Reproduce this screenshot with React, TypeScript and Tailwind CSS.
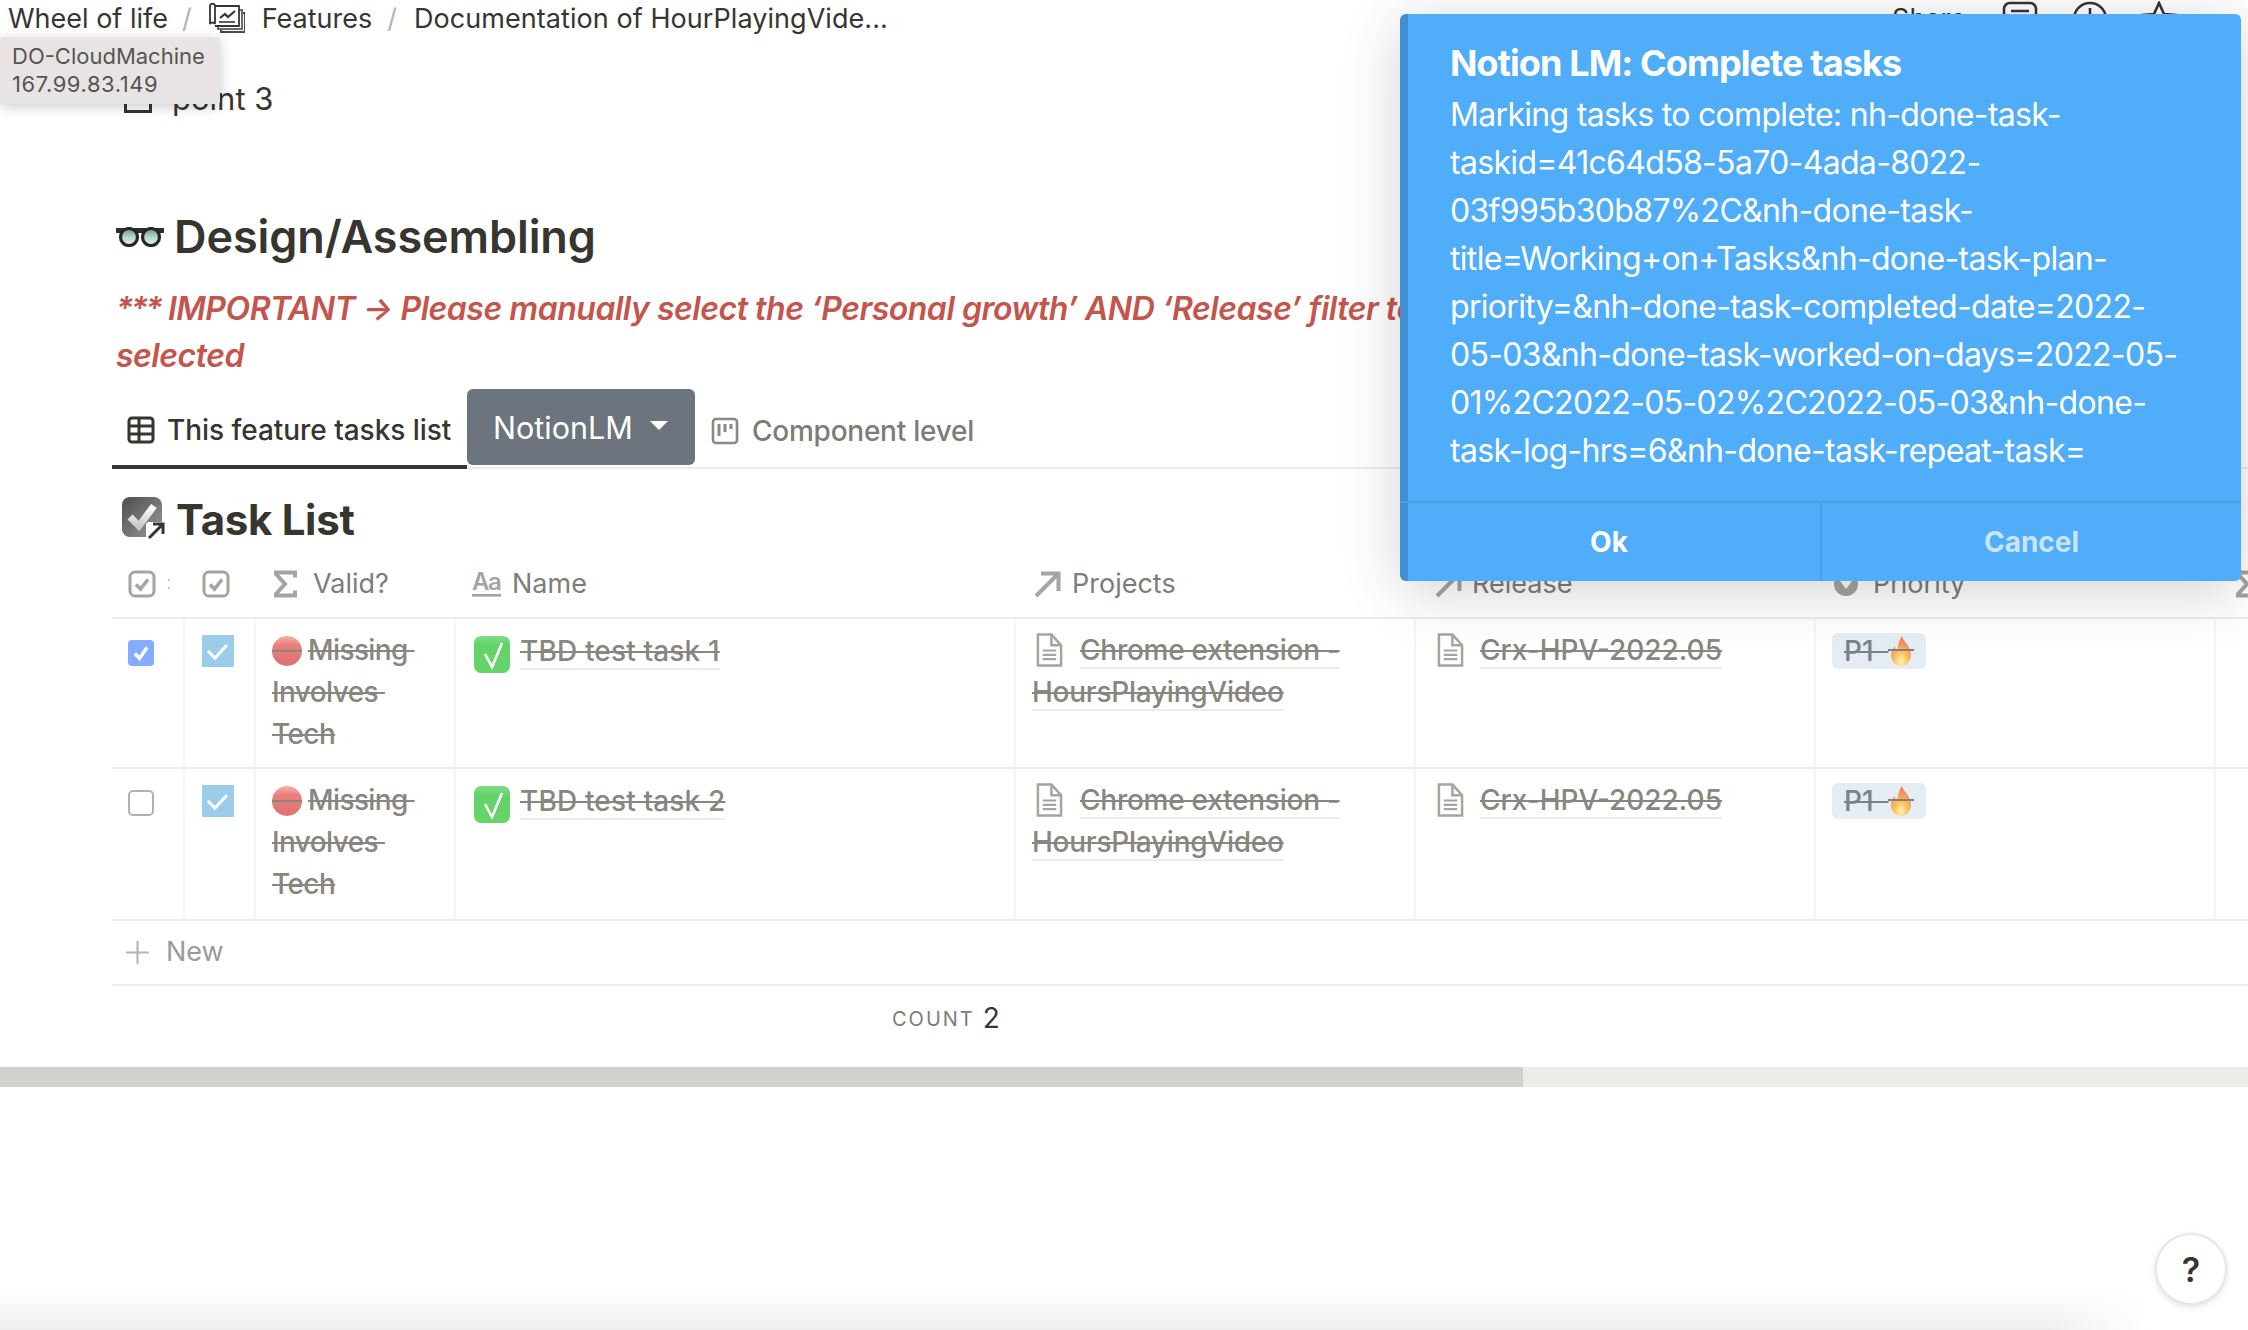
import React from "react";

const FONT = "font-['Inter','Liberation_Sans',sans-serif]";
const GRID = "grid grid-cols-[73px_71px_200px_560px_400px_400px_400px_32px]";

function CheckHead() {
  return (
    <svg viewBox="0 0 28 28" className="w-[28px] h-[28px] shrink-0" fill="none">
      <rect x="2" y="2" width="24" height="24" rx="5" stroke="#a5a49f" strokeWidth="3" />
      <path d="M8 14.5l4.5 4.5L20 9.5" stroke="#a5a49f" strokeWidth="3.6" />
    </svg>
  );
}
function Sigma() {
  return (
    <svg viewBox="0 0 24 28" className="w-[24px] h-[28px] shrink-0" fill="none">
      <path d="M22 7.5V2.5H3v1.5L12 14 3 24v1.5H22v-5" stroke="#a5a49f" strokeWidth="4" />
    </svg>
  );
}
function Arrow() {
  return (
    <svg viewBox="0 0 28 28" className="w-[28px] h-[28px] shrink-0" fill="none">
      <path d="M3 26L25 4M8 3.5h17.5V21" stroke="#a5a49f" strokeWidth="4" />
    </svg>
  );
}
function Aa() {
  return (
    <svg viewBox="0 0 30 28" className="w-[30px] h-[28px] shrink-0" fill="#a5a49f">
      <text x="0" y="20" fontSize="24" fontFamily="Inter, sans-serif" fontWeight="600" letterSpacing="-1.5">Aa</text>
      <rect x="0" y="24" width="29" height="2.6" />
    </svg>
  );
}
function Doc() {
  return (
    <svg viewBox="0 0 28 35" className="w-[27px] h-[34px] shrink-0" fill="none" stroke="#a5a49f" strokeWidth="2.6">
      <path d="M2 1.5h14l10 11v21H2z" />
      <path d="M16 1.5v11h10" />
      <path d="M7 18h14M7 22.5h14M7 27h14" strokeWidth="2.2" />
    </svg>
  );
}
function RedDot() {
  return (
    <svg viewBox="0 0 30 30" className="w-[30px] h-[30px] shrink-0 inline align-[-6px]">
      <defs>
        <linearGradient id="rd" x1="0" y1="0" x2="0" y2="1">
          <stop offset="0" stopColor="#f9b0ac" />
          <stop offset="0.3" stopColor="#ea7f7c" />
          <stop offset="1" stopColor="#dd7170" />
        </linearGradient>
      </defs>
      <circle cx="15" cy="15" r="15" fill="url(#rd)" />
      <rect x="0" y="14" width="30" height="2" fill="#87867f" />
    </svg>
  );
}
function GreenCheck() {
  return (
    <svg viewBox="0 0 36 37" className="w-[36px] h-[37px] shrink-0 inline">
      <defs>
        <linearGradient id="gc" x1="0" y1="0" x2="0" y2="1">
          <stop offset="0" stopColor="#7fdc83" />
          <stop offset="0.25" stopColor="#63d369" />
          <stop offset="1" stopColor="#65d46a" />
        </linearGradient>
      </defs>
      <rect width="36" height="37" rx="7" fill="url(#gc)" />
      <path d="M11 18l7 13L28 7" fill="none" stroke="#fff" strokeWidth="2.6" />
    </svg>
  );
}
function Fire() {
  return (
    <svg viewBox="0 0 26 30" className="w-[26px] h-[30px] inline -ml-[1px] shrink-0">
      <defs>
        <radialGradient id="fr" cx="0.5" cy="0.85" r="0.8">
          <stop offset="0" stopColor="#fff6c0" />
          <stop offset="0.35" stopColor="#ffc860" />
          <stop offset="0.75" stopColor="#fb9458" />
          <stop offset="1" stopColor="#f2795a" />
        </radialGradient>
      </defs>
      <path d="M14 0c1 6 9 9 9 19 0 6-5 11-10 11S3 25 3 19c0-4 2-7 4-9 0 3 1 4 2 5 1-6 2-11 5-15z" fill="url(#fr)" />
      <rect x="0" y="13" width="26" height="2" fill="#7b8186" />
    </svg>
  );
}
function BlueCheck({ on }: { on: boolean }) {
  return on ? (
    <svg viewBox="0 0 26 26" className="w-[26px] h-[26px]">
      <rect width="26" height="26" rx="4" fill="#84acff" />
      <path d="M7 13.5l4.5 5L19 7.5" fill="none" stroke="#fff" strokeWidth="3.4" />
    </svg>
  ) : (
    <svg viewBox="0 0 26 26" className="w-[26px] h-[26px]">
      <rect x="1" y="1" width="24" height="24" rx="4" fill="#fff" stroke="#b0b0b0" strokeWidth="2" />
    </svg>
  );
}
function SkyCheck() {
  return (
    <svg viewBox="0 0 32 32" className="w-[32px] h-[32px]">
      <rect width="32" height="32" fill="#9bcdea" />
      <path d="M6 16l7 7L25 10" fill="none" stroke="#fff" strokeWidth="3" />
    </svg>
  );
}
function Glasses() {
  return (
    <svg viewBox="0 0 48 20" className="w-[48px] h-[20px] shrink-0">
      <defs>
        <linearGradient id="gl" x1="0" y1="0" x2="0" y2="1">
          <stop offset="0" stopColor="#6f918e" />
          <stop offset="0.5" stopColor="#b4d6d0" />
          <stop offset="1" stopColor="#e2f3ee" />
        </linearGradient>
      </defs>
      <path d="M1 3.5h46" stroke="#2e2e2e" strokeWidth="5" strokeLinecap="round" />
      <circle cx="13" cy="10" r="8.5" fill="url(#gl)" stroke="#262626" strokeWidth="3.2" />
      <circle cx="35" cy="10" r="8.5" fill="url(#gl)" stroke="#262626" strokeWidth="3.2" />
    </svg>
  );
}
function TaskIcon() {
  return (
    <svg viewBox="0 0 44 44" className="w-[44px] h-[44px] shrink-0">
      <defs>
        <linearGradient id="tk" x1="0" y1="0" x2="1" y2="1">
          <stop offset="0" stopColor="#4d4d4d" />
          <stop offset="1" stopColor="#9a9a9a" />
        </linearGradient>
        <linearGradient id="tc" x1="0" y1="0" x2="0" y2="1">
          <stop offset="0" stopColor="#ffffff" />
          <stop offset="1" stopColor="#c9c9c9" />
        </linearGradient>
      </defs>
      <rect width="40" height="40" rx="8" fill="url(#tk)" />
      <path d="M8 20l9 9L32 9" fill="none" stroke="url(#tc)" strokeWidth="7" />
      <rect x="24" y="25" width="20" height="19" rx="3" fill="#fff" />
      <path d="M27 41l13-13M31 27h10v10" fill="none" stroke="#37352f" strokeWidth="3" />
    </svg>
  );
}
function Features() {
  return (
    <svg viewBox="0 0 36 30" className="w-[36px] h-[30px] shrink-0" fill="none" stroke="#37352f" strokeWidth="1.8">
      <path d="M12 26v3h24V10h-3" stroke="#4a4a4a" strokeWidth="2" />
      <path d="M9 23v3h24V7h-3" stroke="#6a6a6a" strokeWidth="2" />
      <path d="M6 3h24v20H6" fill="#fff" />
      <path d="M1 3c0-3 5-3 5 0v18c-1-2-4-2-5 0z" fill="#fff" />
      <path d="M11 15l5-4 3 3 7-6" strokeWidth="2.2" />
      <path d="M10 19h16" strokeWidth="1.6" />
    </svg>
  );
}
function TableIcon() {
  return (
    <svg viewBox="0 0 28 28" className="w-[28px] h-[28px] shrink-0" fill="none" stroke="#37352f" strokeWidth="3">
      <rect x="2" y="2" width="24" height="24" rx="3" />
      <path d="M2 10h24M2 18h24M12 2v24" />
    </svg>
  );
}
function BoardIcon() {
  return (
    <svg viewBox="0 0 28 28" className="w-[28px] h-[28px] shrink-0" fill="none" stroke="#8a8983" strokeWidth="2.6">
      <rect x="2" y="2" width="24" height="24" rx="3" />
      <path d="M8 7v12M14 7v8M20 7v5" strokeWidth="3" />
    </svg>
  );
}

const strike = "line-through decoration-[#87867f] decoration-2 text-[#87867f]";
const linkText = "border-b-2 border-[#ececec]";

function Row({ checked, task, tall }: { checked: boolean; task: string; tall?: boolean }) {
  return (
    <div className={`${GRID} border-b-2 border-[#ececec] text-[28px] font-medium leading-[42px] ${tall ? "h-[152px]" : "h-[150px]"}`}>
      <div className="border-r-2 border-[#f5f5f4] pl-[16px] pt-[21px]">
        <BlueCheck on={checked} />
      </div>
      <div className="border-r-2 border-[#f5f5f4] pl-[17px] pt-[16px]">
        <SkyCheck />
      </div>
      <div className={`border-r-2 border-[#f5f5f4] pl-[16px] pt-[10px] whitespace-nowrap tracking-[-0.6px] ${strike}`}>
        <RedDot />
        <span className="ml-[6px]">Missing&nbsp;</span>
        <br />
        Involves&nbsp;
        <br />
        Tech
      </div>
      <div className="border-r-2 border-[#f5f5f4] pl-[18px] pt-[17px] flex items-start gap-[10px]">
        <GreenCheck />
        <span className={`${strike} ${linkText} leading-[34px] tracking-[0.15px] -mt-[2px] h-[36px]`}>{task}</span>
      </div>
      <div className="border-r-2 border-[#f5f5f4] pl-[16px] pt-[10px] tracking-[-0.25px]">
        <span className="inline-block align-[-7px] pl-[4px] mr-[17px]"><Doc /></span>
        <span className={`${strike} ${linkText}`}>Chrome extension -</span>
        <br />
        <span className={`${strike} ${linkText}`}>HoursPlayingVideo</span>
      </div>
      <div className="border-r-2 border-[#f5f5f4] pl-[21px] pt-[10px]">
        <span className="inline-block align-[-7px] mr-[16px]"><Doc /></span>
        <span className={`${strike} ${linkText}`}>Crx-HPV-2022.05</span>
      </div>
      <div className="border-r-2 border-[#f5f5f4] pl-[16px] pt-[14px]">
        <div className="w-[94px] h-[36px] rounded-[6px] bg-[#e4ecf4] flex items-center pl-[12px] text-[28px] leading-[36px]">
          <span className="line-through decoration-[#7b8186] decoration-2 text-[#7b8186]">P1&nbsp;&nbsp;</span>
          <Fire />
        </div>
      </div>
      <div />
    </div>
  );
}

export default function App() {
  return (
    <div className={`${FONT} relative w-[2248px] h-[1330px] overflow-hidden bg-white text-[#37352f]`}>
      {/* top bar */}
      <div className="flex items-center h-[36px] pt-[2px] pl-[8px] text-[27px] whitespace-nowrap">
        <span>Wheel of life</span>
        <span className="ml-[14px] text-[#b5b4af]">/</span>
        <span className="ml-[17px] -mt-[2px]"><Features /></span>
        <span className="ml-[17px]">Features</span>
        <span className="ml-[15px] text-[#b5b4af]">/</span>
        <span className="ml-[17px] tracking-[0.06px]">Documentation of HourPlayingVide...</span>
        <div className="ml-auto flex items-center pr-[3px]">
          <span>Share</span>
          <svg viewBox="0 0 36 36" className="w-[36px] h-[36px] ml-[36px]" fill="none" stroke="#37352f" strokeWidth="2.6"><rect x="2" y="2" width="32" height="28" rx="6" /><path d="M9 10h18M9 17h18" /></svg>
          <svg viewBox="0 0 36 36" className="w-[36px] h-[36px] ml-[34px]" fill="none" stroke="#37352f" strokeWidth="2.6"><circle cx="18" cy="18" r="16" /><path d="M18 7v12" /></svg>
          <svg viewBox="0 0 36 36" className="w-[36px] h-[36px] ml-[33px]" fill="none" stroke="#37352f" strokeWidth="2.6"><path d="M18 2l5 11 12 1-9 8 3 12-11-6-11 6 3-12-9-8 12-1z" /></svg>
          <span className="ml-[32px] w-[36px] h-[8px] flex gap-[5px]"><i className="w-[7px] h-[7px] rounded-full bg-[#37352f]" /><i className="w-[7px] h-[7px] rounded-full bg-[#37352f]" /><i className="w-[7px] h-[7px] rounded-full bg-[#37352f]" /></span>
        </div>
      </div>

      {/* to-do */}
      <div className="mt-[42px] ml-[124px] h-[42px] flex items-center gap-[20px] text-[31px]">
        <span className="w-[28px] h-[28px] border-[3px] border-[#37352f]" />
        <span>point 3</span>
      </div>

      {/* heading */}
      <div className="mt-[89px] ml-[116px] h-[56px] flex items-center gap-[10px]">
        <Glasses />
        <h1 className="text-[45px] font-semibold tracking-[-0.1px]">Design/Assembling</h1>
      </div>

      <p className="mt-[20px] ml-[116px] text-[32px] leading-[47px] font-semibold italic tracking-[-0.47px] text-[#c4554d] whitespace-nowrap">
        <span className="tracking-[-2.5px]">***</span> IMPORTANT → Please manually select the ‘Personal growth’ AND ‘Release’ filter to
        <br />
        selected
      </p>

      {/* tabs */}
      <div className="mt-[9px] ml-[112px] h-[81px] border-b-2 border-[#ececec] flex items-start">
        <div className="w-[355px] h-[81px] border-b-4 border-[#37352f] flex items-center pl-[15px] gap-[12px] text-[28px] font-medium pt-[6px] tracking-[-0.05px]">
          <TableIcon />
          <span>This feature tasks list</span>
        </div>
        <button className="w-[228px] h-[76px] mt-[1px] rounded-[6px] bg-[#6c757d] text-white text-[30.5px] pt-[2px] flex items-center pl-[26px] gap-[17px]">
          NotionLM
          <span className="w-0 h-0 border-x-[9px] border-x-transparent border-t-[9px] border-t-white -mt-[6px]" />
        </button>
        <div className="h-[81px] flex items-center gap-[13px] ml-[16px] pt-[4px] text-[28px] font-medium tracking-[-0.25px] text-[#7d7c77]">
          <BoardIcon />
          <span>Component level</span>
        </div>
      </div>

      {/* task list title */}
      <div className="mt-[25px] ml-[122px] h-[50px] flex items-center gap-[10px]">
        <TaskIcon />
        <h2 className="text-[42px] font-bold tracking-[-0.3px]">Task List</h2>
      </div>

      {/* table */}
      <div className="mt-[5px] ml-[112px]">
        <div className={`${GRID} h-[70px] border-b-2 border-[#ececec] pt-[2px] text-[27px] text-[#7d7c77] items-center`}>
          <div className="pl-[16px] flex items-center gap-[12px]"><CheckHead /><span className="w-[2px] h-[10px] border-y-2 border-[#c8c8c4]" /></div>
          <div className="pl-[17px]"><CheckHead /></div>
          <div className="pl-[17px] flex items-center gap-[16px]"><Sigma /><span>Valid?</span></div>
          <div className="pl-[16px] flex items-center gap-[10px]"><Aa /><span>Name</span></div>
          <div className="pl-[17px] flex items-center gap-[11px]"><Arrow /><span>Projects</span></div>
          <div className="pl-[18px] flex items-center gap-[10px]"><Arrow /><span>Release</span></div>
          <div className="pl-[18px] flex items-center gap-[15px]">
            <svg viewBox="0 0 24 24" className="w-[24px] h-[24px] shrink-0"><circle cx="12" cy="12" r="12" fill="#a5a49f" /><path d="M6 9l6 8 6-8" fill="#fff" /></svg>
            <span>Priority</span>
          </div>
          <div className="pl-[19px]"><Sigma /></div>
        </div>
        <Row checked task="TBD test task 1" />
        <Row checked={false} task="TBD test task 2" tall />
        <div className="h-[65px] border-b-2 border-[#ececec] flex items-center pl-[13px] gap-[16px] text-[27px] text-[#9b9a97]">
          <svg viewBox="0 0 26 26" className="w-[25px] h-[25px]" fill="none" stroke="#b5b4af" strokeWidth="2.2"><path d="M13 1v24M1 13h24" /></svg>
          <span>New</span>
        </div>
      </div>

      {/* count */}
      <div className="mt-[13px] h-[40px] ml-[892px] flex items-center gap-[8px]">
        <span className="text-[20px] tracking-[2px] text-[#7d7c77]">COUNT</span>
        <span className="text-[28px] text-[#37352f] -mt-[2px]">2</span>
      </div>

      {/* horizontal scrollbar */}
      <div className="mt-[28px] h-[20px] bg-[#ecebe7]">
        <div className="w-[1523px] h-full bg-[#d2d1cc]" />
      </div>

      {/* bottom page shade */}
      <div className="absolute inset-x-0 bottom-0 h-[43px] bg-gradient-to-b from-white to-[#efefef]">
        <div className="absolute right-0 top-0 w-[198px] h-full bg-gradient-to-r from-transparent to-white to-50%" />
      </div>

      {/* help */}
      <div className="absolute left-[2155px] top-[1233px] w-[72px] h-[72px] rounded-full bg-white border-2 border-[#e6e6e4] shadow-[0_2px_6px_rgba(0,0,0,0.12)] flex items-center justify-center text-[34px] font-semibold">
        ?
      </div>

      {/* device tooltip */}
      <div className="absolute left-0 top-[37px] w-[220px] h-[67px] bg-[#e8e4e3] rounded-[3px] shadow-[0_3px_14px_rgba(0,0,0,0.2)] pl-[12px] pt-[5px] text-[22px] leading-[28px] text-[#555555]">
        DO-CloudMachine
        <br />
        <span className="tracking-[0.55px]">167.99.83.149</span>
      </div>

      {/* toast */}
      <div className="absolute left-[1400px] top-[14px] w-[841px] h-[567px] rounded-[6px] bg-[#4fadf9] border-l-[8px] border-[#3f8fd2] text-white shadow-[0_10px_60px_rgba(0,0,0,0.18)] flex flex-col">
        <div className="flex-1 pl-[42px] pt-[25px]">
          <div className="text-[36px] leading-[48px] font-bold tracking-[-0.9px]">Notion LM: Complete tasks</div>
          <div className="mt-[4px] text-[32px] leading-[48px] tracking-[-0.68px] whitespace-nowrap">
            Marking tasks to complete: nh-done-task-
            <br />
            taskid=41c64d58-5a70-4ada-8022-
            <br />
            03f995b30b87%2C&amp;nh-done-task-
            <br />
            title=Working+on+Tasks&amp;nh-done-task-plan-
            <br />
            priority=&amp;nh-done-task-completed-date=2022-
            <br />
            05-03&amp;nh-done-task-worked-on-days=2022-05-
            <br />
            01%2C2022-05-02%2C2022-05-03&amp;nh-done-
            <br />
            task-log-hrs=6&amp;nh-done-task-repeat-task=
          </div>
        </div>
        <div className="h-[80px] -ml-[8px] border-t-2 border-[#479fe6] flex text-[28px] font-bold">
          <div className="w-[414px] ml-[8px] pr-[10px] flex items-center justify-center border-r-2 border-[#479fe6]">Ok</div>
          <div className="flex-1 flex items-center justify-center text-white/70">Cancel</div>
        </div>
      </div>
    </div>
  );
}
